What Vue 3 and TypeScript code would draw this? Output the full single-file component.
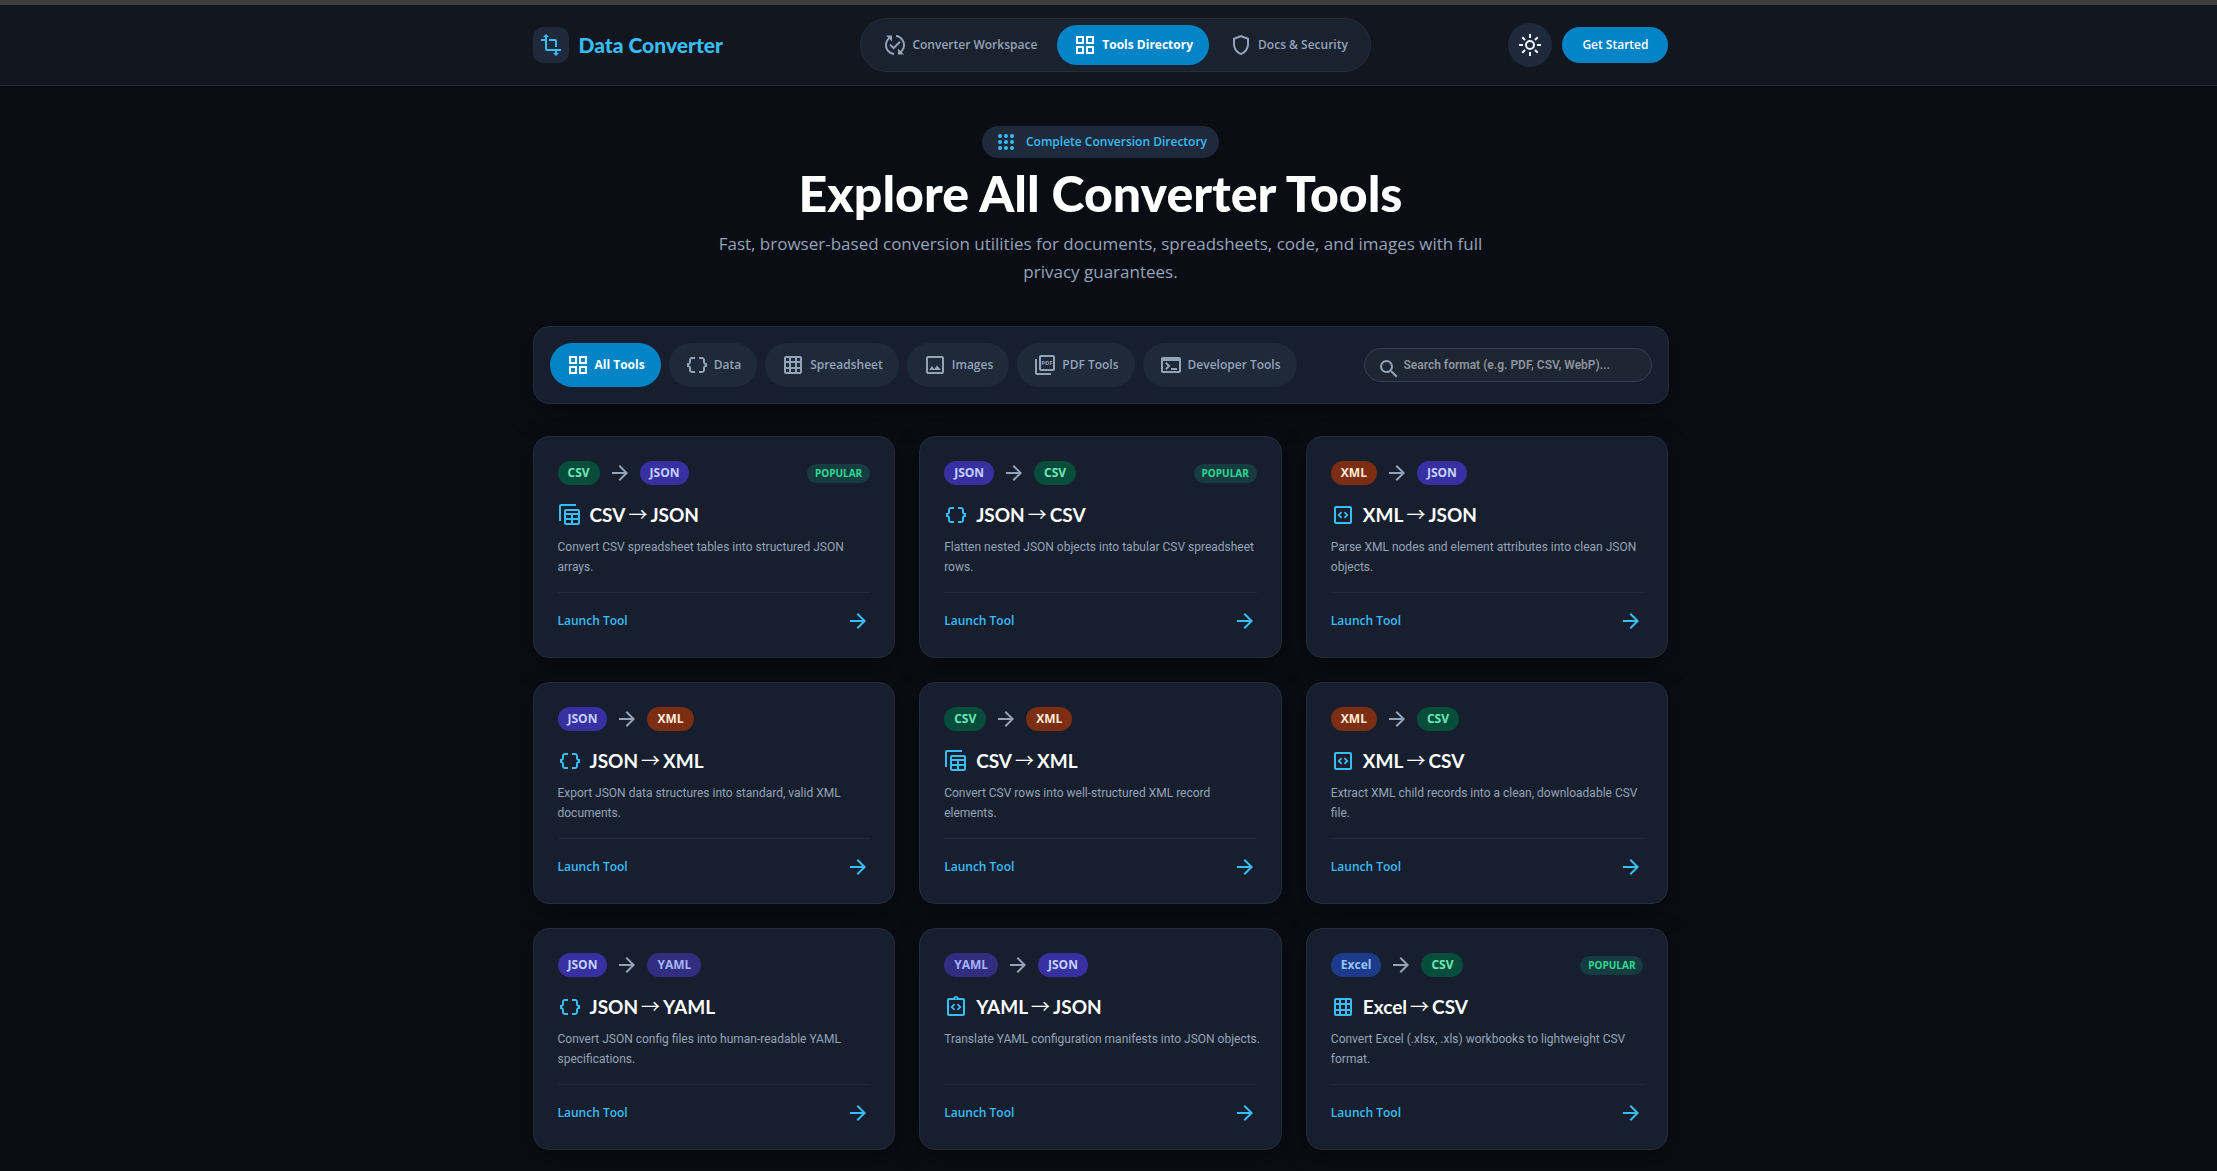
<script setup lang="ts">
import { ref, computed } from 'vue'

type Format = 'CSV' | 'JSON' | 'XML' | 'YAML' | 'Excel'

interface Tool {
  from: Format
  to: Format
  icon: string
  text: string
  popular?: boolean
}

const icons: Record<string, string> = {
  transform:
    'M22 18v-2H8V4h2L7 1 4 4h2v2H2v2h4v8c0 1.1.9 2 2 2h8v2h-2l3 3 3-3h-2v-2h4zM10 8h6v6h2V8c0-1.1-.9-2-2-2h-6v2z',
  changes:
    'M17.66 9.53l-7.07 7.07-4.24-4.24 1.41-1.41 2.83 2.83 5.66-5.66 1.41 1.41zM4 12c0-2.33 1.02-4.42 2.62-5.88L9 8.5v-6H3l2.2 2.2C3.24 6.52 2 9.11 2 12c0 5.19 3.95 9.45 9 9.95v-2.02c-3.94-.49-7-3.86-7-7.93zm18 0c0-5.19-3.95-9.45-9-9.95v2.02c3.94.49 7 3.86 7 7.93 0 2.33-1.02 4.42-2.62 5.88L15 15.5v6h6l-2.2-2.2c1.96-1.82 3.2-4.41 3.2-7.3z',
  tiles:
    'M3 3v8h8V3H3zm6 6H5V5h4v4zm-6 4v8h8v-8H3zm6 6H5v-4h4v4zm4-16v8h8V3h-8zm6 6h-4V5h4v4zm-6 4v8h8v-8h-8zm6 6h-4v-4h4v4z',
  shield:
    'M12 2 4 5v6.09c0 5.05 3.41 9.76 8 10.91 4.59-1.15 8-5.86 8-10.91V5l-8-3zm6 9.09c0 4-2.55 7.7-6 8.83-3.45-1.13-6-4.82-6-8.83v-4.7l6-2.25 6 2.25v4.7z',
  sun: 'M12 9a3 3 0 1 1 0 6 3 3 0 0 1 0-6m0-2a5 5 0 1 0 0 10 5 5 0 0 0 0-10zM11 1h2v4h-2zM11 19h2v4h-2zM1 11h4v2H1zM19 11h4v2h-4zM4.93 3.52 7.76 6.34 6.34 7.76 3.52 4.93zM17.66 16.24l2.82 2.83-1.41 1.41-2.83-2.82zM20.48 4.93 17.66 7.76l-1.42-1.42 2.83-2.82zM7.76 17.66l-2.83 2.82-1.41-1.41 2.82-2.83z',
  dots: 'M6 4a2 2 0 1 1 0 4 2 2 0 0 1 0-4zm6 0a2 2 0 1 1 0 4 2 2 0 0 1 0-4zm6 0a2 2 0 1 1 0 4 2 2 0 0 1 0-4zM6 10a2 2 0 1 1 0 4 2 2 0 0 1 0-4zm6 0a2 2 0 1 1 0 4 2 2 0 0 1 0-4zm6 0a2 2 0 1 1 0 4 2 2 0 0 1 0-4zM6 16a2 2 0 1 1 0 4 2 2 0 0 1 0-4zm6 0a2 2 0 1 1 0 4 2 2 0 0 1 0-4zm6 0a2 2 0 1 1 0 4 2 2 0 0 1 0-4z',
  braces:
    'M4 7v2c0 .55-.45 1-1 1H2v4h1c.55 0 1 .45 1 1v2c0 1.65 1.35 3 3 3h3v-2H7c-.55 0-1-.45-1-1v-2c0-1.3-.84-2.42-2-2.83v-.34C5.16 11.42 6 10.3 6 9V7c0-.55.45-1 1-1h3V4H7C5.35 4 4 5.35 4 7zM21 10c-.55 0-1-.45-1-1V7c0-1.65-1.35-3-3-3h-3v2h3c.55 0 1 .45 1 1v2c0 1.3.84 2.42 2 2.83v.34c-1.16.41-2 1.52-2 2.83v2c0 .55-.45 1-1 1h-3v2h3c1.65 0 3-1.35 3-3v-2c0-.55.45-1 1-1h1v-4h-1z',
  grid: 'M5 3h14a2 2 0 0 1 2 2v14a2 2 0 0 1-2 2H5a2 2 0 0 1-2-2V5a2 2 0 0 1 2-2zM5 5v3h3V5zM10 5v3h4V5zM16 5v3h3V5zM5 10v4h3v-4zM10 10v4h4v-4zM16 10v4h3v-4zM5 16v3h3v-3zM10 16v3h4v-3zM16 16v3h3v-3z',
  image:
    'M19 5v14H5V5h14m0-2H5c-1.1 0-2 .9-2 2v14c0 1.1.9 2 2 2h14c1.1 0 2-.9 2-2V5c0-1.1-.9-2-2-2zM6 17l3-4 2.25 3L14 12.5 18 17z',
  pdf: 'M20 2H8c-1.1 0-2 .9-2 2v12c0 1.1.9 2 2 2h12c1.1 0 2-.9 2-2V4c0-1.1-.9-2-2-2zm0 14H8V4h12v12zM4 6H2v14c0 1.1.9 2 2 2h14v-2H4V6z',
  terminal:
    'M20 4H4c-1.11 0-2 .9-2 2v12c0 1.1.89 2 2 2h16c1.1 0 2-.9 2-2V6c0-1.1-.89-2-2-2zm0 14H4V8h16v10zm-2-1h-6v-2h6v2zM7.5 17l-1.41-1.41L8.67 13l-2.59-2.59L7.5 9l4 4-4 4z',
  search:
    'M15.5 14h-.79l-.28-.27A6.47 6.47 0 0 0 16 9.5 6.5 6.5 0 1 0 9.5 16c1.61 0 3.09-.59 4.23-1.57l.27.28v.79l5 4.99L20.49 19l-4.99-5zm-6 0C7.01 14 5 11.99 5 9.5S7.01 5 9.5 5 14 7.01 14 9.5 11.99 14 9.5 14z',
  arrow: 'M12 4l-1.41 1.41L16.17 11H4v2h12.17l-5.58 5.59L12 20l8-8z',
  table:
    'M8 6h12a2 2 0 0 1 2 2v12a2 2 0 0 1-2 2H8a2 2 0 0 1-2-2V8a2 2 0 0 1 2-2zM8 8v2h12V8zM8 12v3h5v-3zM15 12v3h5v-3zM8 17v3h5v-3zM15 17v3h5v-3zM3 18H1V3a2 2 0 0 1 2-2h15v2H3z',
  code: 'M19 3H5a2 2 0 0 0-2 2v14a2 2 0 0 0 2 2h14a2 2 0 0 0 2-2V5a2 2 0 0 0-2-2zm0 16H5V5h14zM10 8.5 11.2 9.7 9 12l2.2 2.3L10 15.5 6.5 12zM14 8.5 12.8 9.7 15 12l-2.2 2.3 1.2 1.2 3.5-3.5z',
  clipboard:
    'M19 3h-4.18a3 3 0 0 0-5.64 0H5a2 2 0 0 0-2 2v14a2 2 0 0 0 2 2h14a2 2 0 0 0 2-2V5a2 2 0 0 0-2-2zm-7-.25a.75.75 0 1 1 0 1.5.75.75 0 0 1 0-1.5zM19 19H5V5h14zM10 8.5 11.2 9.7 9 12l2.2 2.3L10 15.5 6.5 12zM14 8.5 12.8 9.7 15 12l-2.2 2.3 1.2 1.2 3.5-3.5z',
}

const navItems = [
  { label: 'Converter Workspace', icon: 'changes', active: false },
  { label: 'Tools Directory', icon: 'tiles', active: true },
  { label: 'Docs & Security', icon: 'shield', active: false },
]

const categories = [
  { label: 'All Tools', icon: 'tiles' },
  { label: 'Data', icon: 'braces' },
  { label: 'Spreadsheet', icon: 'grid' },
  { label: 'Images', icon: 'image' },
  { label: 'PDF Tools', icon: 'pdf' },
  { label: 'Developer Tools', icon: 'terminal' },
]

const tools: Tool[] = [
  { from: 'CSV', to: 'JSON', icon: 'table', text: 'Convert CSV spreadsheet tables into structured JSON arrays.', popular: true },
  { from: 'JSON', to: 'CSV', icon: 'braces', text: 'Flatten nested JSON objects into tabular CSV spreadsheet rows.', popular: true },
  { from: 'XML', to: 'JSON', icon: 'code', text: 'Parse XML nodes and element attributes into clean JSON objects.' },
  { from: 'JSON', to: 'XML', icon: 'braces', text: 'Export JSON data structures into standard, valid XML documents.' },
  { from: 'CSV', to: 'XML', icon: 'table', text: 'Convert CSV rows into well-structured XML record elements.' },
  { from: 'XML', to: 'CSV', icon: 'code', text: 'Extract XML child records into a clean, downloadable CSV file.' },
  { from: 'JSON', to: 'YAML', icon: 'braces', text: 'Convert JSON config files into human-readable YAML specifications.' },
  { from: 'YAML', to: 'JSON', icon: 'clipboard', text: 'Translate YAML configuration manifests into JSON objects.' },
  { from: 'Excel', to: 'CSV', icon: 'grid', text: 'Convert Excel (.xlsx, .xls) workbooks to lightweight CSV format.', popular: true },
]

const category = ref('All Tools')
const query = ref('')

const visibleTools = computed(() => {
  const q = query.value.trim().toLowerCase()
  return tools.filter((t) => !q || `${t.from} ${t.to} ${t.text}`.toLowerCase().includes(q))
})
</script>

<template>
  <div class="page">
    <header class="header">
      <div class="container header-row">
        <a class="brand" href="#">
          <span class="brand-mark">
            <svg class="icon" viewBox="0 0 24 24" aria-hidden="true"><path :d="icons.transform" /></svg>
          </span>
          Data Converter
        </a>
        <nav class="nav">
          <a v-for="n in navItems" :key="n.label" href="#" class="nav-link" :class="{ active: n.active }">
            <svg class="icon" viewBox="0 0 24 24" aria-hidden="true"><path :d="icons[n.icon]" /></svg>
            {{ n.label }}
          </a>
        </nav>
        <div class="actions">
          <button class="theme" type="button" aria-label="Toggle theme">
            <svg class="icon" viewBox="0 0 24 24" aria-hidden="true"><path fill-rule="evenodd" :d="icons.sun" /></svg>
          </button>
          <button class="start" type="button">Get Started</button>
        </div>
      </div>
    </header>

    <main class="container">
      <section class="hero">
        <span class="eyebrow">
          <svg class="icon" viewBox="0 0 24 24" aria-hidden="true"><path :d="icons.dots" /></svg>
          Complete Conversion Directory
        </span>
        <h1>Explore All Converter Tools</h1>
        <p>Fast, browser-based conversion utilities for documents, spreadsheets, code, and images with full privacy guarantees.</p>
      </section>

      <section class="toolbar">
        <div class="tabs">
          <button
            v-for="c in categories"
            :key="c.label"
            type="button"
            class="tab"
            :class="{ active: c.label === category }"
            @click="category = c.label"
          >
            <svg class="icon" viewBox="0 0 24 24" aria-hidden="true">
              <path fill-rule="evenodd" :d="icons[c.icon]" />
              <text v-if="c.icon === 'pdf'" class="pdf-label" x="14" y="12" text-anchor="middle">PDF</text>
            </svg>
            {{ c.label }}
          </button>
        </div>
        <label class="search">
          <svg class="icon" viewBox="0 0 24 24" aria-hidden="true"><path :d="icons.search" /></svg>
          <input v-model="query" type="text" aria-label="Search format" placeholder="Search format (e.g. PDF, CSV, WebP)..." />
        </label>
      </section>

      <section class="grid">
        <article v-for="t in visibleTools" :key="t.from + t.to" class="card">
          <div class="card-top">
            <span class="format" :class="t.from.toLowerCase()">{{ t.from }}</span>
            <svg class="icon" viewBox="0 0 24 24" aria-hidden="true"><path :d="icons.arrow" /></svg>
            <span class="format" :class="t.to.toLowerCase()">{{ t.to }}</span>
            <span v-if="t.popular" class="popular">POPULAR</span>
          </div>
          <h2>
            <svg class="icon" viewBox="0 0 24 24" aria-hidden="true"><path fill-rule="evenodd" :d="icons[t.icon]" /></svg>
            <span class="pair">{{ t.from }}<span class="to">→</span>{{ t.to }}</span>
          </h2>
          <p>{{ t.text }}</p>
          <a class="launch" href="#">
            Launch Tool
            <svg class="icon" viewBox="0 0 24 24" aria-hidden="true"><path :d="icons.arrow" /></svg>
          </a>
        </article>
      </section>
    </main>
  </div>
</template>

<style>
body {
  margin: 0;
  background: #0a0d14;
}
</style>

<style scoped>
* {
  box-sizing: border-box;
}

.page {
  min-height: 100vh;
  padding-bottom: 20px;
  border-top: 5px solid #3d3f3c;
  background: #0a0d14;
  color: #fff;
  font-family: 'Open Sans', 'Noto Sans', sans-serif;
  font-size: 12px;
  line-height: 20px;
}

a {
  color: inherit;
  text-decoration: none;
}

button {
  border: 0;
  font: inherit;
  cursor: pointer;
}

.icon {
  flex: none;
  width: 24px;
  height: 24px;
  fill: currentColor;
}

.header,
main.container {
  padding-right: 16px;
}

.container {
  width: 100%;
  max-width: 1136px;
  margin: 0 auto;
}

main.container {
  max-width: 1152px;
}

.header {
  background: #12161f;
  border-bottom: 1px solid #262b36;
}

.header-row {
  display: flex;
  align-items: center;
  justify-content: space-between;
  height: 80px;
}

.brand {
  display: flex;
  align-items: center;
  gap: 10px;
  color: #38bdf8;
  font-family: Lato, sans-serif;
  font-size: 21px;
  font-weight: 900;
}

.brand-mark {
  display: grid;
  place-items: center;
  width: 36px;
  height: 36px;
  border-radius: 10px;
  background: #1e293b;
}

.nav {
  display: flex;
  gap: 4px;
  padding: 6px;
  border: 1px solid #242d3b;
  border-radius: 27px;
  background: #1a2230;
}

.nav-link {
  display: flex;
  align-items: center;
  gap: 5px;
  padding: 8px 16px;
  border-radius: 20px;
  color: #94a3b8;
  font-weight: 600;
}

.nav-link.active {
  background: #0284c7;
  color: #fff;
}

.actions {
  display: flex;
  align-items: center;
  gap: 10px;
}

.theme {
  display: grid;
  place-items: center;
  width: 44px;
  height: 44px;
  padding: 0;
  border-radius: 50%;
  background: #1e293b;
  color: #f1f5f9;
}

.start {
  height: 36px;
  padding: 0 20px;
  border-radius: 18px;
  background: #0284c7;
  color: #fff;
  font-weight: 600;
}

.hero {
  display: flex;
  flex-direction: column;
  align-items: center;
  padding: 40px 0;
  text-align: center;
}

.eyebrow {
  display: flex;
  align-items: center;
  gap: 8px;
  padding: 4px 12px;
  border-radius: 16px;
  background: #1e293b;
  color: #38bdf8;
  font-weight: 600;
}

h1 {
  margin: 6px 0 8px;
  font-family: Lato, sans-serif;
  font-size: 50px;
  font-weight: 900;
  line-height: 58px;
}

.hero p {
  max-width: 780px;
  margin: 0;
  color: #94a3b8;
  font-size: 17px;
  line-height: 28px;
}

.toolbar {
  display: flex;
  align-items: center;
  justify-content: space-between;
  margin-bottom: 32px;
  padding: 16px;
  border: 1px solid #242c3b;
  border-radius: 16px;
  background: #171f2e;
  box-shadow: 0 8px 30px rgba(0, 0, 0, 0.35);
}

.tabs {
  display: flex;
  gap: 8px;
}

.tab {
  display: flex;
  align-items: center;
  gap: 5px;
  padding: 10px 16px;
  border-radius: 22px;
  background: #1e293a;
  color: #94a3b8;
  font-weight: 600;
}

.nav-link.active,
.tab.active {
  font-weight: 700;
}

.tab.active {
  background: #0284c7;
  color: #fff;
}

.pdf-label {
  font-size: 6px;
  font-weight: 700;
}

.search {
  display: flex;
  align-items: center;
  gap: 3px;
  width: 288px;
  height: 34px;
  padding: 8px 12px 0;
  border: 1px solid #343e4d;
  border-radius: 17px;
  background: #1e2633;
  color: #94a3b8;
}

.search input {
  flex: 1;
  min-width: 0;
  height: 24px;
  margin-top: -8px;
  padding: 0;
  border: 0;
  outline: 0;
  background: none;
  color: #fff;
  font-family: Roboto, sans-serif;
  font-size: 12px;
  font-weight: 600;
}

.search input::placeholder {
  color: #8d949e;
  opacity: 1;
}

.grid {
  display: grid;
  grid-template-columns: repeat(3, minmax(0, 1fr));
  gap: 24px;
}

.card {
  display: flex;
  flex-direction: column;
  padding: 24px;
  border: 1px solid #242c3a;
  border-radius: 16px;
  background: #171f2e;
  box-shadow: 0 8px 24px rgba(0, 0, 0, 0.35);
}

.card-top {
  display: flex;
  align-items: center;
  gap: 8px;
  margin-bottom: 16px;
  color: #94a3b8;
}

.format {
  padding: 2px 10px;
  border-radius: 12px;
  font-weight: 700;
}

.csv {
  background: #064e3b;
  color: #6ee7b7;
}

.json {
  background: #3730a3;
  color: #c7d2fe;
}

.xml {
  background: #7c2d12;
  color: #ffedd5;
}

.yaml {
  background: #312e81;
  color: #a5b4fc;
}

.excel {
  background: #1e3a8a;
  color: #93c5fd;
}

.popular {
  margin-left: auto;
  padding: 2px 8px;
  border-radius: 10px;
  background: #163c40;
  color: #2bd995;
  font-size: 10px;
  font-weight: 700;
  line-height: 15px;
}

h2 {
  display: flex;
  align-items: center;
  gap: 8px;
  margin: 0 0 8px;
  font-family: Lato, sans-serif;
  font-size: 19px;
  font-weight: 700;
  line-height: 28px;
}

h2 .icon,
.launch {
  color: #38bdf8;
}

.to {
  margin: 0 3px;
  font-family: 'Noto Sans CJK JP', sans-serif;
  font-weight: 400;
  line-height: 1;
}

.card p {
  min-height: 40px;
  margin: 0 -8px 15px 0;
  color: #94a3b8;
  font-family: Roboto, sans-serif;
}

.launch {
  display: flex;
  align-items: center;
  justify-content: space-between;
  margin-top: auto;
  padding-top: 16px;
  border-top: 1px solid #222a38;
  font-weight: 600;
}
</style>
